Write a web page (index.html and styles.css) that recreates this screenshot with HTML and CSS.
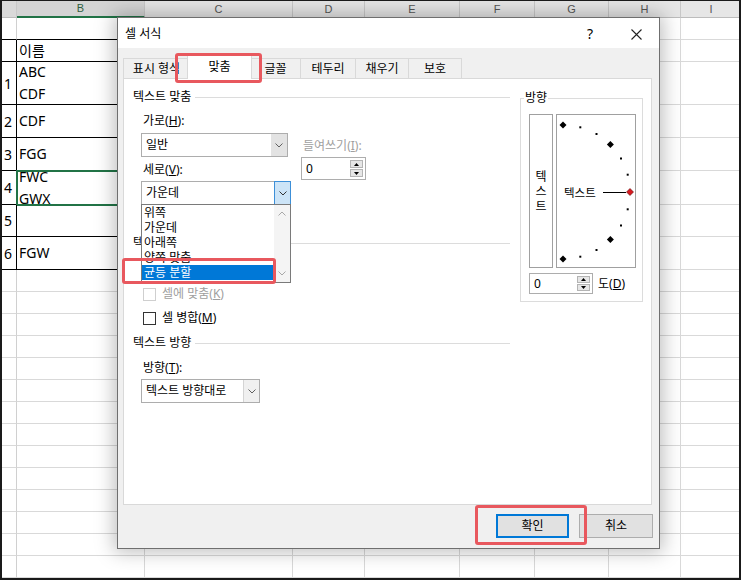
FILE: index.html
```html
<!DOCTYPE html>
<html lang="ko">
<head>
<meta charset="utf-8">
<title>셀 서식</title>
<link rel="stylesheet" href="styles.css">
</head>
<body>
<div class="screen">
  <div class="sheet">
    <div class="colhdr">
      <div class="ch ch-corner"></div>
      <div class="ch ch-b">B</div>
      <div class="ch ch-c">C</div>
      <div class="ch ch-d">D</div>
      <div class="ch ch-e">E</div>
      <div class="ch ch-f">F</div>
      <div class="ch ch-g">G</div>
      <div class="ch ch-h">H</div>
      <div class="ch ch-i">I</div>
    </div>
    <div class="rows">
      <div class="row r22 tb"><div class="rh"></div><div class="bc"></div><div class="rest"></div></div>
      <div class="row r22 t"><div class="rh"></div><div class="bc"><span>이름</span></div><div class="rest"></div></div>
      <div class="row r43 t"><div class="rh">1</div><div class="bc"><span>ABC</span><span>CDF</span></div><div class="rest"></div></div>
      <div class="row r33 t"><div class="rh">2</div><div class="bc"><span>CDF</span></div><div class="rest"></div></div>
      <div class="row r33 t"><div class="rh">3</div><div class="bc"><span>FGG</span></div><div class="rest"></div></div>
      <div class="row r34 t"><div class="rh">4</div><div class="bc sel"><span>FWC</span><span>GWX</span></div><div class="rest"></div></div>
      <div class="row r32 t"><div class="rh">5</div><div class="bc"></div><div class="rest"></div></div>
      <div class="row r33 t"><div class="rh">6</div><div class="bc"><span>FGW</span></div><div class="rest"></div></div>
      <div class="row r22"><div class="rh"></div><div class="bc"></div><div class="rest"></div></div>
      <div class="row r22"><div class="rh"></div><div class="bc"></div><div class="rest"></div></div>
      <div class="row r22"><div class="rh"></div><div class="bc"></div><div class="rest"></div></div>
      <div class="row r22"><div class="rh"></div><div class="bc"></div><div class="rest"></div></div>
      <div class="row r22"><div class="rh"></div><div class="bc"></div><div class="rest"></div></div>
      <div class="row r22"><div class="rh"></div><div class="bc"></div><div class="rest"></div></div>
      <div class="row r22"><div class="rh"></div><div class="bc"></div><div class="rest"></div></div>
      <div class="row r22"><div class="rh"></div><div class="bc"></div><div class="rest"></div></div>
      <div class="row r22"><div class="rh"></div><div class="bc"></div><div class="rest"></div></div>
      <div class="row r22"><div class="rh"></div><div class="bc"></div><div class="rest"></div></div>
      <div class="row r22"><div class="rh"></div><div class="bc"></div><div class="rest"></div></div>
      <div class="row r22"><div class="rh"></div><div class="bc"></div><div class="rest"></div></div>
      <div class="row r22"><div class="rh"></div><div class="bc"></div><div class="rest"></div></div>
      <div class="row r22"><div class="rh"></div><div class="bc"></div><div class="rest"></div></div>
    </div>
  </div>

  <div class="dialog">
    <div class="titlebar">
      <div class="title">셀 서식</div>
      <div class="tb-btn help">?</div>
      <div class="tb-btn close">
        <svg width="11" height="11" viewBox="0 0 11 11"><path d="M0.5 0.5 L10.5 10.5 M10.5 0.5 L0.5 10.5" stroke="#222" stroke-width="1.1" fill="none"/></svg>
      </div>
    </div>
    <div class="body">
      <div class="tabs">
        <div class="tab w67">표시 형식</div>
        <div class="tab on">맞춤</div>
        <div class="tab w51">글꼴</div>
        <div class="tab w56">테두리</div>
        <div class="tab w54">채우기</div>
        <div class="tab w54">보호</div>
      </div>
      <div class="page">
        <div class="lc">
          <div class="sec s1">텍스트 맞춤</div>
          <div class="agrid">
            <div class="col1">
              <div class="lbl">가로(<u>H</u>):</div>
              <div class="combo c-h">
                <div class="val">일반</div>
                <div class="dd"><svg width="8" height="5" viewBox="0 0 8 5"><polyline points="0.5,0.5 4,4 7.5,0.5" fill="none" stroke="#606060"/></svg></div>
              </div>
              <div class="lbl l-v">세로(<u>V</u>):</div>
              <div class="combo-wrap">
                <div class="combo c-v">
                  <div class="val">가운데</div>
                  <div class="dd active"><svg width="8" height="5" viewBox="0 0 8 5"><polyline points="0.5,0.5 4,4 7.5,0.5" fill="none" stroke="#333"/></svg></div>
                </div>
                <div class="ddlist">
                  <div class="items">
                    <div class="item">위쪽</div>
                    <div class="item">가운데</div>
                    <div class="item">아래쪽</div>
                    <div class="item">양쪽 맞춤</div>
                    <div class="item hl">균등 분할</div>
                  </div>
                  <div class="sb">
                    <svg width="8" height="5" viewBox="0 0 8 5"><polyline points="0.5,4.5 4,1 7.5,4.5" fill="none" stroke="#a8a8a8"/></svg>
                    <svg width="8" height="5" viewBox="0 0 8 5"><polyline points="0.5,0.5 4,4 7.5,0.5" fill="none" stroke="#a8a8a8"/></svg>
                  </div>
                </div>
              </div>
            </div>
            <div class="col2">
              <div class="lbl dis">들여쓰기(<u>I</u>):</div>
              <div class="spin s-ind">
                <div class="val">0</div>
                <div class="arrows">
                  <span><svg width="5" height="3" viewBox="0 0 5 3"><polygon points="0,3 2.5,0 5,3" fill="#000"/></svg></span>
                  <span><svg width="5" height="3" viewBox="0 0 5 3"><polygon points="0,0 2.5,3 5,0" fill="#000"/></svg></span>
                </div>
              </div>
            </div>
          </div>
          <div class="sec s2">텍스트 조정</div>
          <div class="chk c1"><span class="box"></span><span>텍스트 줄 바꿈(<u>W</u>)</span></div>
          <div class="chk c2 dis"><span class="box"></span><span>셀에 맞춤(<u>K</u>)</span></div>
          <div class="chk c2"><span class="box"></span><span>셀 병합(<u>M</u>)</span></div>
          <div class="sec s3">텍스트 방향</div>
          <div class="lbl l-t">방향(<u>T</u>):</div>
          <div class="combo c-t">
            <div class="val">텍스트 방향대로</div>
            <div class="dd plain"><svg width="8" height="5" viewBox="0 0 8 5"><polyline points="0.5,0.5 4,4 7.5,0.5" fill="none" stroke="#606060"/></svg></div>
          </div>
        </div>
        <fieldset class="dir">
          <legend>방향</legend>
          <div class="dirbox">
            <div class="vbox"><span>텍</span><span>스</span><span>트</span></div>
            <div class="dial">
              <svg width="78" height="152" viewBox="0 0 78 152">
                <g fill="#000">
                  <polygon points="6,6.5 9.5,10 6,13.5 2.5,10"/>
                  <polygon points="53.4,26.1 56.9,29.6 53.4,33.1 49.9,29.6"/>
                  <polygon points="53.4,120.9 56.9,124.4 53.4,127.9 49.9,124.4"/>
                  <polygon points="6,140.5 9.5,144 6,147.5 2.5,144"/>
                  <rect x="22.3" y="11.3" width="2" height="2"/>
                  <rect x="38.5" y="18" width="2" height="2"/>
                  <rect x="63" y="42.5" width="2" height="2"/>
                  <rect x="69.7" y="58.7" width="2" height="2"/>
                  <rect x="69.7" y="93.3" width="2" height="2"/>
                  <rect x="63" y="109.5" width="2" height="2"/>
                  <rect x="38.5" y="134" width="2" height="2"/>
                  <rect x="22.3" y="140.7" width="2" height="2"/>
                </g>
                <text x="7" y="81.5" class="dial-text">텍스트</text>
                <line x1="46" y1="77.5" x2="69" y2="77.5" stroke="#000" stroke-width="1"/>
                <polygon points="73,73.5 76.5,77 73,80.5 69.5,77" fill="#d8191f" stroke="#5a0a0a" stroke-width="0.6"/>
              </svg>
            </div>
          </div>
          <div class="degrow">
            <div class="spin s-deg">
              <div class="val">0</div>
              <div class="arrows">
                <span><svg width="5" height="3" viewBox="0 0 5 3"><polygon points="0,3 2.5,0 5,3" fill="#000"/></svg></span>
                <span><svg width="5" height="3" viewBox="0 0 5 3"><polygon points="0,0 2.5,3 5,0" fill="#000"/></svg></span>
              </div>
            </div>
            <div class="deg-lbl">도(<u>D</u>)</div>
          </div>
        </fieldset>
      </div>
      <div class="btns">
        <div class="btn def">확인</div>
        <div class="btn">취소</div>
      </div>
    </div>
  </div>

  <div class="redbox rb1"></div>
  <div class="redbox rb2"></div>
  <div class="redbox rb3"></div>
</div>
</body>
</html>
```
FILE: styles.css
```css
* { box-sizing: border-box; }
html, body { margin: 0; padding: 0; background: #fff; }
body { font-family: "Noto Sans", "Noto Sans CJK KR", sans-serif; color: #000; }

.screen { position: relative; width: 741px; height: 580px; overflow: hidden; background: #fff; }
.screen::after {
  content: ""; position: absolute; inset: 0; pointer-events: none; z-index: 50;
  border: 2px solid #1a1a1a; border-top-width: 1px;
}

/* ---------- spreadsheet ---------- */
.colhdr { display: flex; height: 18px; background: #e6e6e6; font-family: "Liberation Sans", sans-serif; font-size: 11px; color: #555; }
.ch { height: 18px; border-right: 1px solid #c8c8c8; border-bottom: 1px solid #bcbcbc; display: flex; align-items: center; justify-content: center; flex: none; }
.ch-corner { width: 17px; background: #d9d9d9; }
.ch-b { width: 128px; background: #d4d4d4; color: #2f5f3f; border-bottom: 2px solid #217346; }
.ch-c { width: 148px; }
.ch-d { width: 72px; }
.ch-e { width: 95px; }
.ch-f { width: 75px; }
.ch-g { width: 74px; }
.ch-h { width: 72px; }
.ch-i { flex: 1; border-right: none; }

.rows {
  background-image: linear-gradient(to right,
    transparent 144px, #d9d9d9 144px 145px,
    transparent 145px 292px, #d9d9d9 292px 293px,
    transparent 293px 364px, #d9d9d9 364px 365px,
    transparent 365px 459px, #d9d9d9 459px 460px,
    transparent 460px 534px, #d9d9d9 534px 535px,
    transparent 535px 608px, #d9d9d9 608px 609px,
    transparent 609px 680px, #d9d9d9 680px 681px,
    transparent 681px);
}
.row { display: flex; }
.r22 { height: 22px; }
.r43 { height: 43px; }
.r33 { height: 33px; }
.r34 { height: 34px; }
.r32 { height: 32px; }
.rh {
  width: 17px; flex: none; border-right: 1px solid #d0d0d0; border-bottom: 1px solid #d9d9d9;
  font-size: 14px; display: flex; align-items: center; justify-content: center;
}
.bc {
  width: 128px; flex: none; border-bottom: 1px solid #d9d9d9; padding-left: 2px;
  font-size: 14px; line-height: 22px; display: flex; flex-direction: column; justify-content: center; overflow: hidden;
}
.rest { flex: 1; border-bottom: 1px solid #d9d9d9; }
.t .rh, .t .bc, .tb .rh, .tb .bc { border-bottom-color: #000; }
.t .rh { border-right-color: #000; }
.bc.sel { outline: 2px solid #217346; outline-offset: -1px; }

/* ---------- dialog ---------- */
.dialog {
  position: absolute; left: 117px; top: 17px; width: 543px; height: 532px; z-index: 10;
  background: #f0f0f0; border: 1px solid #6f6f6f;
  box-shadow: 0 0 18px 3px rgba(0, 0, 0, 0.26);
  font-size: 12px; line-height: 14px; display: flex; flex-direction: column;
}
.titlebar { height: 30px; flex: none; background: #fff; display: flex; align-items: center; }
.title { flex: 1; padding-left: 7px; padding-top: 1px; }
.tb-btn { width: 46px; height: 30px; display: flex; align-items: center; justify-content: center; }
.help { font-family: "Noto Sans", sans-serif; font-size: 14px; padding-top: 2px; }
.close { padding-top: 2px; }

.body { flex: 1; padding: 7px 6px 0 5px; display: flex; flex-direction: column; }
.tabs { display: flex; align-items: flex-end; height: 23px; }
.tab {
  height: 20px; border: 1px solid #d9d9d9; border-bottom: none; margin-right: -1px;
  display: flex; align-items: center; justify-content: center; background: #f0f0f0; flex: none;
}
.tab.on { width: 65px; height: 24px; background: #fff; margin: 0 -2px -1px -2px; position: relative; z-index: 2; padding-bottom: 2px; }
.w67 { width: 67px; }
.w51 { width: 51px; }
.w56 { width: 56px; }
.w54 { width: 54px; }

.page { width: 529px; height: 427px; background: #fff; border: 1px solid #d9d9d9; display: flex; align-items: flex-start; flex: none; }

.lc { width: 388px; padding-left: 9px; padding-right: 2px; flex: none; }
.sec { display: flex; align-items: center; gap: 4px; height: 14px; }
.sec::after { content: ""; flex: 1; height: 1px; background: #dcdcdc; }
.s1 { margin-top: 11px; }
.s2 { margin-top: 31px; }
.s3 { margin-top: 11px; }

.lbl { height: 14px; padding-left: 2px; white-space: nowrap; }
.lbl.dis { color: #a0a0a0; }
.l-v { margin-top: 6px; }
.l-t { margin-top: 11px; margin-left: 8px; }

.agrid { display: flex; align-items: flex-start; margin-top: 10px; padding-left: 8px; }
.col1 { width: 150px; flex: none; }
.col2 { margin-left: 10px; padding-top: 25px; }

.combo { display: flex; height: 24px; border: 1px solid #adadad; background: #fff; }
.combo .val { flex: 1; padding-left: 4px; display: flex; align-items: center; white-space: nowrap; }
.combo .dd { width: 16px; flex: none; background: #e3e3e3; display: flex; align-items: center; justify-content: center; }
.combo .dd.active { background: #cce4f7; border: 1px solid #3c8fd8; margin: -1px -1px -1px 0; width: 17px; }
.combo .dd.plain { background: #f0f0f0; border-left: 1px solid #d4d4d4; }
.c-h { width: 147px; margin-top: 5px; }
.combo-wrap { position: relative; margin-top: 4px; }
.c-v { width: 150px; }
.c-t { width: 119px; margin-top: 4px; margin-left: 8px; }

.ddlist {
  position: absolute; left: 0; top: calc(100% - 1px); width: 150px; height: 79px; z-index: 5;
  background: #fff; border: 1px solid #7a7a7a; display: flex;
}
.items { flex: 1; }
.item { height: 15px; line-height: 15px; padding-left: 2px; white-space: nowrap; }
.item.hl { background: #0078d7; color: #fff; }
.sb { width: 16px; flex: none; background: #f4f4f4; display: flex; flex-direction: column; justify-content: space-between; align-items: center; padding: 6px 0 6px; }

.spin { display: flex; background: #fff; border: 1px solid #adadad; }
.spin .val { flex: 1; padding-left: 4px; display: flex; align-items: center; }
.spin .arrows { width: 15px; display: flex; flex-direction: column; padding: 2px 2px 2px 0; gap: 1px; }
.spin .arrows span { flex: 1; background: #e6e6e6; border: 1px solid #b4b4b4; display: flex; align-items: center; justify-content: center; }
.s-ind { width: 65px; height: 23px; margin-top: 4px; }
.s-deg { width: 64px; height: 21px; }

.chk { display: flex; align-items: center; gap: 6px; height: 14px; margin-left: 10px; white-space: nowrap; }
.chk .box { width: 13px; height: 13px; border: 1px solid #333; background: #fff; flex: none; }
.chk.dis { color: #a0a0a0; }
.chk.dis .box { border-color: #cfcfcf; }
.c1 { margin-top: 13px; }
.c2 { margin-top: 10px; }

fieldset.dir {
  margin: 12px 0 0 8px; padding: 9px 0 0 8px; width: 123px; height: 211px; min-width: 0;
  border: 1px solid #dcdcdc;
}
fieldset.dir legend { padding: 0 1px; margin-left: -5px; line-height: 14px; font-size: 12px; }
.dirbox { display: flex; gap: 3px; }
.vbox {
  width: 24px; height: 154px; border: 1px solid #a0a0a0; background: #fff;
  display: flex; flex-direction: column; align-items: center; justify-content: center; line-height: 15px;
}
.dial { width: 80px; height: 154px; border: 1px solid #a0a0a0; background: #fff; }
.dial svg { display: block; }
.dial-text { font-family: "Noto Sans CJK KR", sans-serif; font-size: 11.5px; }
.degrow { display: flex; align-items: center; gap: 5px; margin-top: 5px; }

.btns { display: flex; justify-content: flex-end; gap: 10px; margin-top: 9px; }
.btn { width: 74px; height: 24px; background: #e1e1e1; border: 1px solid #adadad; display: flex; align-items: center; justify-content: center; }
.btn.def { width: 73px; border: 2px solid #0078d7; }

/* ---------- annotation boxes ---------- */
.redbox { position: absolute; border: 3px solid #e8585e; border-radius: 3px; z-index: 20; }
.rb1 { left: 175px; top: 53px; width: 87px; height: 30px; }
.rb2 { left: 122px; top: 258px; width: 154px; height: 26px; }
.rb3 { left: 475px; top: 505px; width: 112px; height: 40px; }
```
